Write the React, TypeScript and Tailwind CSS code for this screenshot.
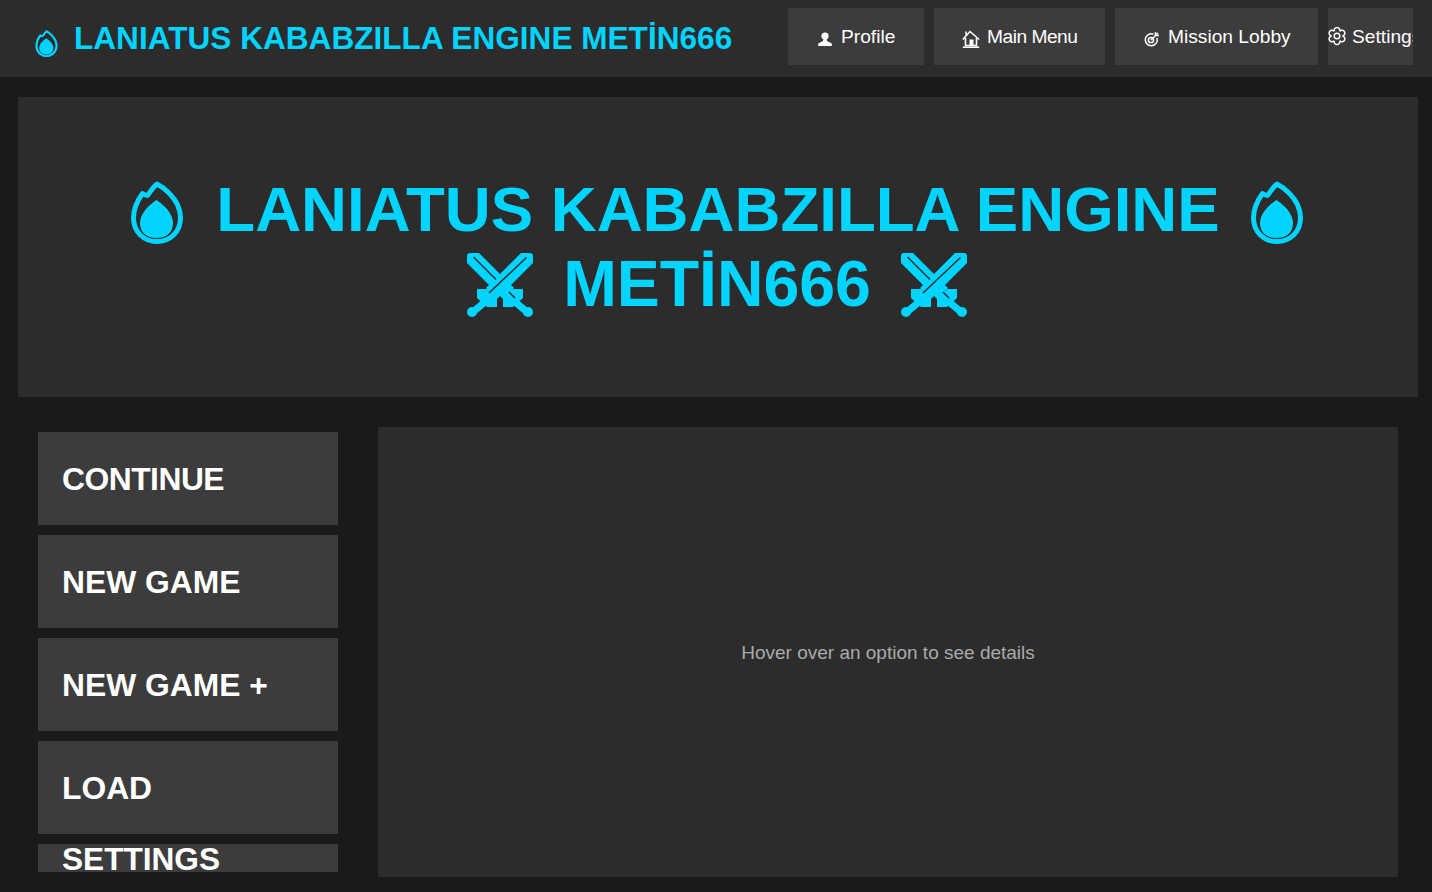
const FONT = "font-['Liberation_Sans',Arial,sans-serif]";

function Flame({ className }: { className: string }) {
  return (
    <svg viewBox="0 0 52 63" className={className} aria-hidden>
      <path
        d="M26 3 C22 6 20 10 16.500 14.500 C14.500 14.500 13 13.500 11.500 12.500 C6 20 2.500 28 2.500 37 C2.500 51 13 60.500 26 60.500 C39 60.500 49.500 51 49.500 37 C49.500 27 44 18 38 12 C34 8 30 5 26 3 Z"
        fill="none"
        stroke="#00d4ff"
        strokeWidth="5"
        strokeLinejoin="round"
      />
      <path
        d="M25.500 19 C19 23 9 32 9 42 C9 52 17 58 25.500 58 C34 58 42 52 42 42 C42 32 32 23 25.500 19 Z"
        fill="#00d4ff"
      />
      <path
        d="M7.500 41 C8 52 16 57.500 25.500 57.500 C35 57.500 43 52 43.500 41"
        fill="none"
        stroke="#2c2c2c"
        strokeWidth="1"
      />
    </svg>
  );
}

function Swords({ className }: { className: string }) {
  return (
    <svg viewBox="0 0 68 67" className={className} aria-hidden>
      <g fill="#00d4ff">
        <path d="M1 5 Q1 2 4 2 L13 2 L48 37 L37 48 L1 12 Z" />
        <path d="M67 5 Q67 2 64 2 L55 2 L20 37 L31 48 L67 12 Z" />
        <path d="M11 38 L21 38 L31 47 L31 56 L21 56 L11 47 Z" />
        <path d="M57 38 L47 38 L37 47 L37 56 L47 56 L57 47 Z" />
      </g>
      <g stroke="#00d4ff" strokeWidth="7" fill="none">
        <path d="M20 50 L7 61" />
        <path d="M48 50 L61 61" />
      </g>
      <g fill="#00d4ff">
        <circle cx="6" cy="61" r="5" />
        <circle cx="62" cy="61" r="5" />
      </g>
      <g stroke="#2c2c2c" strokeWidth="1.500" fill="none">
        <path d="M7.500 6 L30 28.500" />
        <path d="M60.500 6.500 L23 42" />
        <path d="M43 41 L49 47" />
      </g>
    </svg>
  );
}

function UserGlyph() {
  return (
    <svg viewBox="0 0 14 14" className="h-[14px] w-[14px] shrink-0" aria-hidden>
      <circle cx="7" cy="4" r="3.600" fill="#fff" />
      <path d="M5.500 6.500 L8.500 6.500 L9 9 L13.800 11.500 L13.800 14 L0.200 14 L0.200 11.500 L5 9 Z" fill="#fff" />
    </svg>
  );
}

function HomeGlyph() {
  return (
    <svg viewBox="0 0 18 18" className="h-[18px] w-[18px] shrink-0" fill="none" stroke="#fff" strokeWidth="1.600" aria-hidden>
      <path d="M0.800 9.500 L8 1.500 L17.200 9.500" />
      <path d="M3.500 8 L3.500 15.500 L14.500 15.500 L14.500 8" />
      <path d="M4 1.500 L4 5" />
      <rect x="7.500" y="9.500" width="4" height="6" fill="#fff" stroke="none" />
      <path d="M0.800 17.200 L17.200 17.200" />
    </svg>
  );
}

function TargetGlyph() {
  return (
    <svg viewBox="0 0 16 16" className="h-[16px] w-[16px] shrink-0" fill="none" stroke="#fff" strokeWidth="1.500" aria-hidden>
      <path d="M9.500 3.200 A6 6 0 1 0 13 7" />
      <circle cx="7" cy="9" r="2.600" />
      <path d="M7 9 L14 2" strokeWidth="1.600" />
      <path d="M11.500 1 L11.500 4.500 L15 4.500" strokeWidth="1.500" />
    </svg>
  );
}

function GearGlyph() {
  const lobes = [0, 60, 120, 180, 240, 300];
  return (
    <svg viewBox="0 0 18 20" className="h-[20px] w-[18px] shrink-0" fill="none" stroke="#fff" strokeWidth="1.500" aria-hidden>
      <circle cx="9" cy="10" r="2.800" />
      {lobes.map((deg) => (
        <path
          key={deg}
          d="M6.250 5.240 A2.900 2.900 0 1 1 11.750 5.240"
          transform={`rotate(${deg} 9 10)`}
        />
      ))}
    </svg>
  );
}

const NAV = [
  { label: "Profile", icon: <UserGlyph />, width: "w-[136px]", pad: "pl-[30px]", gap: "gap-[9px]", drop: "mt-[5px]", text: "mt-[1px]" },
  { label: "Main Menu", icon: <HomeGlyph />, width: "w-[171px]", pad: "pl-[28px]", gap: "gap-[7px]", drop: "mt-[5px]", text: "mt-[1px] tracking-[-0.5px]" },
  { label: "Mission Lobby", icon: <TargetGlyph />, width: "w-[203px]", pad: "pl-[29px]", gap: "gap-[8px]", drop: "mt-[5px]", text: "mt-[1px]" },
  { label: "Settings", icon: <GearGlyph />, width: "w-[85px]", pad: "pl-0", gap: "gap-[6px]", drop: "-mt-[1px]", text: "mt-[1px]" },
];

const MENU = [
  { label: "CONTINUE", text: "tracking-[-0.5px]" },
  { label: "NEW GAME", text: "" },
  { label: "NEW GAME +", text: "" },
  { label: "LOAD", text: "" },
];

export default function App() {
  return (
    <div className={`flex h-[892px] w-[1432px] flex-col overflow-hidden bg-[#1a1a1a] ${FONT}`}>
      <header className="flex h-[77px] shrink-0 items-start justify-between bg-[#2c2c2c] pl-[35px] pr-[19px] pt-[8px]">
        <h1 className="mt-[10px] flex items-start whitespace-nowrap text-[31.600px] font-bold leading-[40px] text-[#00d4ff]">
          <Flame className="mt-[12px] mr-[16px] h-[27px] w-[23px]" />
          LANIATUS KABABZILLA ENGINE METİN666
        </h1>
        <nav className="flex gap-[10px]">
          {NAV.map((item) => (
            <button
              key={item.label}
              type="button"
              className={`flex h-[57px] items-center overflow-hidden whitespace-nowrap bg-[#3c3c3c] text-[19.200px] text-white ${item.width} ${item.pad} ${item.gap}`}
            >
              <span className={`flex ${item.drop}`}>{item.icon}</span>
              <span className={item.text}>{item.label}</span>
            </button>
          ))}
        </nav>
      </header>

      <section className="ml-[18px] mt-[20px] flex h-[300px] w-[1400px] shrink-0 flex-col items-center justify-center bg-[#2c2c2c] font-bold leading-[75px] text-[#00d4ff]">
        <div className="-mt-[1px] flex -translate-y-[1px] items-center gap-[33px] whitespace-nowrap pr-[2px] text-[63.600px]">
          <Flame className="mt-[8px] h-[63px] w-[52px]" />
          LANIATUS KABABZILLA ENGINE
          <Flame className="-ml-[2px] mt-[8px] h-[63px] w-[52px]" />
        </div>
        <div className="flex items-center gap-[29px] whitespace-nowrap pr-[2px] text-[64.400px]">
          <Swords className="h-[67px] w-[68px]" />
          METİN666
          <Swords className="h-[67px] w-[68px]" />
        </div>
      </section>

      <main className="ml-[38px] mt-[30px] flex h-[450px] w-[1360px] gap-[40px]">
        <div className="flex w-[300px] shrink-0 flex-col gap-[10px] pt-[5px]">
          {MENU.map((item) => (
            <button
              key={item.label}
              type="button"
              className="flex h-[93px] shrink-0 items-center bg-[#3c3c3c] pl-[24px] pt-[2px] text-[31.800px] font-bold text-white"
            >
              <span className={item.text}>{item.label}</span>
            </button>
          ))}
          <button
            type="button"
            className="flex h-[28px] shrink-0 items-center bg-[#3c3c3c] pl-[24px] pt-[3px] text-[31.600px] font-bold text-white"
          >
            SETTINGS
          </button>
        </div>
        <div className="flex flex-1 items-center justify-center bg-[#2c2c2c] pt-[2px] text-[19px] text-[#aaaaaa]">
          Hover over an option to see details
        </div>
      </main>
    </div>
  );
}
